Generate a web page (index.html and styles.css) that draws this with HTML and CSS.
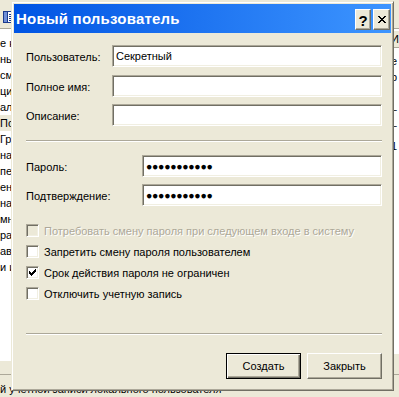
FILE: index.html
```html
<!DOCTYPE html>
<html lang="ru">
<head>
<meta charset="utf-8">
<title>Новый пользователь</title>
<link rel="stylesheet" href="styles.css">
</head>
<body>
<div class="desktop">
  <div class="mmc">
    <div class="toolbar">
      <svg class="tb-icon" width="10" height="12" viewBox="0 0 10 12" shape-rendering="crispEdges">
        <rect x="0" y="0" width="10" height="12" fill="#1c3a8c"/>
        <rect x="1" y="1" width="3" height="10" fill="#6f8fd8"/>
        <rect x="5" y="1" width="4" height="10" fill="#ffffff"/>
        <rect x="6" y="3" width="2" height="1" fill="#1c3a8c"/>
        <rect x="6" y="5" width="2" height="1" fill="#1c3a8c"/>
        <rect x="6" y="7" width="2" height="1" fill="#1c3a8c"/>
        <rect x="6" y="9" width="2" height="1" fill="#1c3a8c"/>
      </svg>
    </div>
    <div class="panes">
      <div class="tree">
        <div class="tree-list">
          <div class="row">е к</div>
          <div class="row">нь</div>
          <div class="row">смо</div>
          <div class="row">цие</div>
          <div class="row">ал</div>
          <div class="row selected">По</div>
          <div class="row">Гр</div>
          <div class="row">на</div>
          <div class="row">пе</div>
          <div class="row">ен</div>
          <div class="row">нак</div>
          <div class="row">мн</div>
          <div class="row">ра</div>
          <div class="row">ав</div>
          <div class="row">и и</div>
        </div>
        <div class="tree-scroll"></div>
      </div>
      <div class="list">
        <div class="list-head">И</div>
        <div class="list-rows">
          <div class="row">е</div>
          <div class="row">р</div>
          <div class="row"></div>
          <div class="row gap">Г</div>
          <div class="row">Г</div>
          <div class="row">1</div>
        </div>
        <div class="list-scroll"></div>
      </div>
    </div>
    <div class="status">й учетной записи локального пользователя</div>
  </div>

  <div class="dialog">
    <div class="titlebar">
      <span class="title">Новый пользователь</span>
      <div class="caption-btns">
        <span class="cbtn help">?</span>
        <span class="cbtn close">
          <svg width="8" height="7" viewBox="0 0 8 7" shape-rendering="crispEdges">
            <rect x="0" y="0" width="2" height="1"/><rect x="6" y="0" width="2" height="1"/>
            <rect x="1" y="1" width="2" height="1"/><rect x="5" y="1" width="2" height="1"/>
            <rect x="2" y="2" width="4" height="1"/>
            <rect x="3" y="3" width="2" height="1"/>
            <rect x="2" y="4" width="4" height="1"/>
            <rect x="1" y="5" width="2" height="1"/><rect x="5" y="5" width="2" height="1"/>
            <rect x="0" y="6" width="2" height="1"/><rect x="6" y="6" width="2" height="1"/>
          </svg>
        </span>
      </div>
    </div>
    <div class="body">
      <div class="form form-top">
        <label class="lbl">Пользователь:</label><div class="edit">Секретный</div>
        <label class="lbl">Полное имя:</label><div class="edit"></div>
        <label class="lbl">Описание:</label><div class="edit"></div>
      </div>
      <div class="sep"></div>
      <div class="form form-pw">
        <label class="lbl">Пароль:</label><div class="edit"><span class="pw">●●●●●●●●●●●</span></div>
        <label class="lbl">Подтверждение:</label><div class="edit"><span class="pw">●●●●●●●●●●●</span></div>
      </div>
      <div class="checks">
        <div class="chk disabled"><span class="box"></span><span class="chk-text">Потребовать смену пароля при следующем входе в систему</span></div>
        <div class="chk"><span class="box"></span><span class="chk-text">Запретить смену пароля пользователем</span></div>
        <div class="chk"><span class="box">
          <svg width="7" height="7" viewBox="0 0 7 7" shape-rendering="crispEdges">
            <rect x="6" y="0" width="1" height="1"/>
            <rect x="5" y="1" width="2" height="1"/>
            <rect x="0" y="2" width="1" height="1"/><rect x="4" y="2" width="3" height="1"/>
            <rect x="0" y="3" width="2" height="1"/><rect x="3" y="3" width="3" height="1"/>
            <rect x="0" y="4" width="5" height="1"/>
            <rect x="1" y="5" width="3" height="1"/>
            <rect x="2" y="6" width="1" height="1"/>
          </svg>
        </span><span class="chk-text">Срок действия пароля не ограничен</span></div>
        <div class="chk"><span class="box"></span><span class="chk-text">Отключить учетную запись</span></div>
      </div>
      <div class="sep sep2"></div>
      <div class="buttons">
        <button class="btn default">Создать</button>
        <button class="btn">Закрыть</button>
      </div>
    </div>
  </div>
</div>
</body>
</html>
```
FILE: styles.css
```css
* { box-sizing: border-box; }
html, body { margin: 0; padding: 0; }
body { background: #ece9d8; }

.desktop {
  position: relative;
  width: 399px;
  height: 397px;
  overflow: hidden;
  background: #ece9d8;
  font-family: "Liberation Sans", Arial, sans-serif;
  font-size: 11px;
  color: #000;
}

/* ---------- background console window ---------- */
.mmc { display: flex; flex-direction: column; height: 100%; }
.toolbar {
  height: 29px;
  padding: 11px 0 0 3px;
  border-bottom: 1px solid #aca899;
}
.tb-icon { display: block; }
.panes {
  display: flex;
  height: 345px;
  border-top: 1px solid #fff;
}
.tree { width: 393px; display: flex; flex-direction: column; }
.tree-list { flex: 1; background: #fff; padding-top: 5px; }
.tree-scroll { height: 13px; background: #ece9d8; }
.row { height: 16px; line-height: 16px; white-space: nowrap; }
.row.selected { background: #ece9d8; }

.list {
  flex: 1;
  display: flex;
  flex-direction: column;
  border-left: 1px solid #aca899;
  background: #fff;
}
.list-head {
  height: 17px;
  margin-top: 1px;
  line-height: 16px;
  background: #ece9d8;
  border-bottom: 1px solid #aca899;
  white-space: nowrap;
}
.list-rows { flex: 1; padding-top: 5px; }
.list-rows .gap { margin-top: 5px; }
.list-scroll { height: 20px; background: #ece9d8; }

.status {
  flex: 1;
  border-top: 1px solid #aca899;
  padding-top: 8px;
  line-height: 13px;
  white-space: nowrap;
}

/* ---------- dialog window ---------- */
.dialog {
  position: absolute;
  left: 11px;
  top: 1px;
  width: 383px;
  height: 390px;
  padding: 2px;
  background: #ece9d8;
  border: 1px solid;
  border-color: #ece9d8 #716f64 #716f64 #ece9d8;
  box-shadow: inset 1px 1px #fff, inset -1px -1px #aca899;
  display: flex;
  flex-direction: column;
}

.titlebar {
  height: 29px;
  display: flex;
  align-items: flex-start;
  justify-content: space-between;
  background: linear-gradient(to right, #0054e3, #3d95ff);
  padding: 0 1px 0 2px;
}
.title {
  color: #fff;
  font-weight: bold;
  font-size: 15px;
  letter-spacing: 0.2px;
  line-height: 30px;
  white-space: nowrap;
}
.caption-btns { display: flex; gap: 2px; margin-top: 5px; }
.cbtn {
  width: 16px;
  height: 21px;
  display: flex;
  align-items: center;
  justify-content: center;
  background: #ece9d8;
  border: 1px solid;
  border-color: #fff #716f64 #716f64 #fff;
  box-shadow: inset -1px -1px #aca899;
  color: #000;
}
.cbtn.close { width: 17px; }
.help { font-weight: bold; font-size: 15px; line-height: 1; padding-top: 1px; }
.close svg { display: block; fill: #000; }

.body {
  flex: 1;
  display: flex;
  flex-direction: column;
  padding: 12px 9px 0 12px;
}

.form {
  display: grid;
  grid-auto-rows: 22px;
  align-items: center;
}
.form-top { grid-template-columns: 86px 1fr; row-gap: 7.5px; }
.form-pw { grid-template-columns: 116px 1fr; row-gap: 7px; margin-top: 13px; }
.lbl { white-space: nowrap; padding-top: 2px; }

.edit {
  height: 22px;
  background: #fff;
  border: 1px solid;
  border-color: #aca899 #fff #fff #aca899;
  box-shadow: inset 1px 1px #716f64, inset -1px -1px #f1efe2;
  padding: 0 4px 0 3px;
  display: flex;
  align-items: center;
  white-space: nowrap;
  overflow: hidden;
}
.pw { font-size: 10.5px; letter-spacing: -0.3px; line-height: 1; }

.sep {
  height: 2px;
  margin-top: 14px;
  border-top: 1px solid #aca899;
  border-bottom: 1px solid #fff;
}
.sep2 { margin-top: 33px; }

.checks {
  display: flex;
  flex-direction: column;
  gap: 8px;
  margin-top: 18px;
}
.chk { display: flex; align-items: center; height: 13px; gap: 5px; white-space: nowrap; }
.box {
  width: 13px;
  height: 13px;
  flex: none;
  background: #fff;
  border: 1px solid;
  border-color: #aca899 #fff #fff #aca899;
  box-shadow: inset 1px 1px #716f64, inset -1px -1px #f1efe2;
  display: flex;
  align-items: center;
  justify-content: center;
}
.box svg { display: block; fill: #000; }
.chk.disabled .box { background: #ece9d8; }
.chk.disabled .chk-text { color: #aca899; text-shadow: 1px 1px #fff; }

.buttons {
  display: flex;
  justify-content: flex-end;
  gap: 6px;
  margin-top: 18px;
}
.btn {
  width: 75px;
  height: 26px;
  padding: 0;
  font: inherit;
  font-size: 11px;
  color: #000;
  background: #ece9d8;
  border: 1px solid;
  border-color: #fff #716f64 #716f64 #fff;
  box-shadow: inset -1px -1px #aca899;
  border-radius: 0;
}
.btn.default {
  border-color: #000;
  box-shadow: inset 1px 1px #fff, inset -1px -1px #716f64, inset -2px -2px #aca899;
}
```
